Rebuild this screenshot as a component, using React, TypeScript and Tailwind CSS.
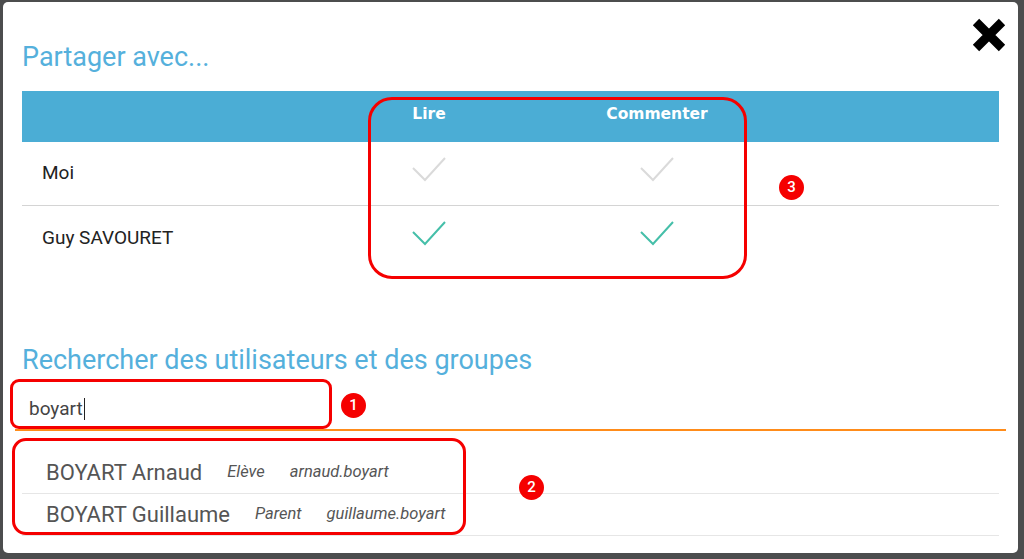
import React from 'react';

const rows = [
  { name: 'Moi', on: false },
  { name: 'Guy SAVOURET', on: true },
];

const results = [
  { name: 'BOYART Arnaud', role: 'Elève', login: 'arnaud.boyart' },
  { name: 'BOYART Guillaume', role: 'Parent', login: 'guillaume.boyart' },
];

const Check: React.FC<{ on: boolean }> = ({ on }) => (
  <svg width="34" height="26" viewBox="0 0 34 26" className="-mt-[10px]">
    <polyline
      points="1,12 13,24 33,2"
      fill="none"
      stroke={on ? '#45bfa9' : '#dadada'}
      strokeWidth="2"
    />
  </svg>
);

const Marker: React.FC<{ n: number; className: string }> = ({ n, className }) => (
  <div
    className={`absolute w-[25px] h-[25px] rounded-full bg-[#f50000] text-white flex items-center justify-center text-[15px] font-medium font-[Roboto,sans-serif] ${className}`}
  >
    {n}
  </div>
);

export default function App() {
  return (
    <div className="relative w-[1024px] h-[559px] bg-[#4c4d4e] pt-[2px] pl-[3px] overflow-hidden font-[Roboto,'Liberation_Sans',sans-serif]">
      <div className="relative w-[1015px] h-[551px] bg-white rounded-[5px] pl-[19px] pr-[19px] pt-[39px]">
        <button className="absolute top-[15px] right-[11px]">
          <svg width="36" height="36" viewBox="0 0 36 36">
            <path d="M5 5 L31 31 M31 5 L5 31" stroke="#000" strokeWidth="9" />
          </svg>
        </button>

        <h2 className="text-[27px] leading-[32px] text-[#55b0dc]">Partager avec...</h2>

        <div className="mt-[18px]">
          <div className="grid grid-cols-[293px_228px_228px_1fr] h-[51px] bg-[#4badd5] items-center pb-[3px] text-white font-['DejaVu_Sans',sans-serif] font-bold text-[15.5px]">
            <div />
            <div className="text-center">Lire</div>
            <div className="text-center">Commenter</div>
            <div />
          </div>
          {rows.map((r, i) => (
            <div
              key={r.name}
              className={`grid grid-cols-[293px_228px_228px_1fr] h-[64px] items-center ${i === 0 ? 'border-b border-[#d4d4d4]' : ''}`}
            >
              <div className="pl-[20px] text-[19px] text-[#222]">{r.name}</div>
              <div className="flex justify-center"><Check on={r.on} /></div>
              <div className="flex justify-center"><Check on={r.on} /></div>
              <div />
            </div>
          ))}
        </div>

        <h2 className="mt-[74px] text-[27px] leading-[32px] text-[#55b0dc]">
          Rechercher des utilisateurs et des groupes
        </h2>

        <div className="mt-[11px] -ml-[7px] mr-[-7px] h-[44px] border-b-2 border-[#ff8c1a] flex items-center pl-[14px] pt-[2px]">
          <span className="text-[19px] text-[#444]">boyart</span>
          <span className="w-px h-[22px] bg-[#222] ml-px" />
        </div>

        <div className="mt-[21px]">
          {results.map((r) => (
            <div key={r.name} className="h-[42px] border-b border-[#e6e6e6] flex items-center pl-[24px] text-[#555]">
              <span className="text-[22px]">{r.name}</span>
              <span className="ml-[25px] text-[16.5px] italic">{r.role}</span>
              <span className="ml-[25px] text-[16.5px] italic">{r.login}</span>
            </div>
          ))}
        </div>
      </div>

      {/* annotations */}
      <div className="absolute left-[368px] top-[97px] w-[379px] h-[182px] border-[3px] border-[#f50000] rounded-[24px]" />
      <Marker n={3} className="left-[779px] top-[175px]" />
      <div className="absolute left-[10px] top-[379px] w-[322px] h-[50px] border-[3px] border-[#f50000] rounded-[9px]" />
      <Marker n={1} className="left-[341px] top-[393px]" />
      <div className="absolute left-[12px] top-[438px] w-[454px] h-[97px] border-[3px] border-[#f50000] rounded-[14px]" />
      <Marker n={2} className="left-[519px] top-[475px]" />
    </div>
  );
}
